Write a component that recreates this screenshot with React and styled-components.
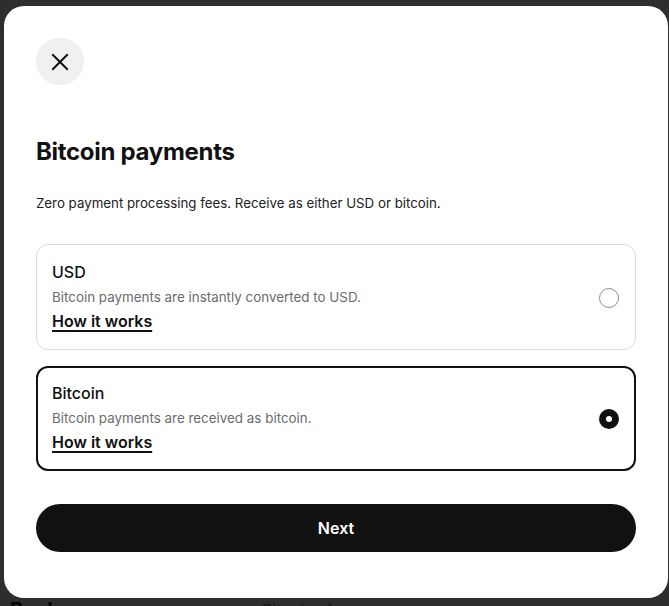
import React, { useState } from 'react';
import styled, { createGlobalStyle } from 'styled-components';

const GlobalStyle = createGlobalStyle`
  html, body {
    margin: 0;
    padding: 0;
    height: 100%;
    overflow: hidden;
  }
  body {
    background: #ffffff;
    font-family: Inter, "Noto Sans", "Liberation Sans", sans-serif;
    color: #111111;
    -webkit-font-smoothing: antialiased;
  }
`;

// page behind the dialog, mostly hidden by the overlay
const Page = styled.div`
  height: 100vh;
  display: flex;
  flex-direction: column;
`;

const PageSpacer = styled.div`
  flex: 1;
`;

const PageRow = styled.div`
  display: flex;
  align-items: flex-start;
  height: 22px;
  margin-bottom: -15px;
  padding-left: 10px;
`;

const PageRowLabel = styled.div`
  width: 252px;
  font-size: 20px;
  font-weight: 700;
  line-height: 22px;
  color: #111;
`;

const PageRowValue = styled.div`
  font-size: 16px;
  line-height: 22px;
  color: #777;
  display: flex;
  align-items: center;
  gap: 14px;
`;

const Overlay = styled.div`
  position: fixed;
  inset: 0;
  background: rgba(0, 0, 0, 0.82);
  display: flex;
  padding: 6px 1px 8px 4px;
  box-sizing: border-box;
`;

const Modal = styled.div`
  flex: 1;
  background: #ffffff;
  border-radius: 20px;
  padding: 32px 32px 46px;
  display: flex;
  flex-direction: column;
  box-sizing: border-box;
`;

const CloseButton = styled.button`
  width: 48px;
  height: 48px;
  border-radius: 50%;
  border: none;
  background: #f0f0f0;
  display: flex;
  align-items: center;
  justify-content: center;
  padding: 0;
  cursor: pointer;
`;

const Title = styled.h1`
  margin: 51px 0 0;
  font-size: 24px;
  line-height: 32px;
  font-weight: 700;
  letter-spacing: -0.3px;
  color: #111;
`;

const Subtitle = styled.p`
  margin: 25px 0 0;
  font-size: 13.3px;
  line-height: 20px;
  color: #222;
`;

const Options = styled.div`
  margin-top: 31px;
  display: flex;
  flex-direction: column;
  gap: 16px;
`;

const Option = styled.label`
  display: flex;
  align-items: center;
  border: ${p => (p.$selected ? '2px solid #111' : '1px solid #dcdcdc')};
  border-radius: 12px;
  padding: ${p => (p.$selected ? '15px 15px 15px 14px' : '17px 16px 16px 15px')};
  cursor: pointer;
`;

const OptionText = styled.div`
  flex: 1;
  display: flex;
  flex-direction: column;
`;

const OptionTitle = styled.div`
  font-size: 16px;
  line-height: 20px;
  font-weight: 500;
  color: #111;
`;

const OptionDesc = styled.div`
  margin-top: 5px;
  font-size: 13.4px;
  line-height: 20px;
  color: #6b6b6b;
`;

const HowLink = styled.a`
  margin-top: 2px;
  align-self: flex-start;
  font-size: 16px;
  line-height: 24px;
  font-weight: 600;
  color: #111;
  text-decoration: underline;
  text-underline-offset: 3px;
  text-decoration-thickness: 1.5px;
`;

const Radio = styled.span`
  width: 20px;
  height: 20px;
  border-radius: 50%;
  box-sizing: border-box;
  border: ${p => (p.$checked ? 'none' : '1.5px solid #8f8f8f')};
  background: ${p => (p.$checked ? '#111' : '#fff')};
  display: flex;
  align-items: center;
  justify-content: center;
  flex-shrink: 0;

  &::after {
    content: '';
    display: ${p => (p.$checked ? 'block' : 'none')};
    width: 6px;
    height: 6px;
    border-radius: 50%;
    background: #fff;
  }
`;

const NextButton = styled.button`
  margin-top: 33px;
  height: 48px;
  border: none;
  border-radius: 24px;
  background: #111111;
  color: #ffffff;
  font-family: inherit;
  font-size: 16px;
  font-weight: 600;
  cursor: pointer;
`;

const options = [
  { id: 'usd', title: 'USD', desc: 'Bitcoin payments are instantly converted to USD.' },
  { id: 'btc', title: 'Bitcoin', desc: 'Bitcoin payments are received as bitcoin.' },
];

function CloseIcon() {
  return (
    <svg width="18" height="18" viewBox="0 0 18 18" fill="none">
      <path d="M2 2 16 16M16 2 2 16" stroke="#111" strokeWidth="2" strokeLinecap="square" />
    </svg>
  );
}

function Chevron() {
  return (
    <svg width="10" height="14" viewBox="0 0 10 14" fill="none">
      <path d="M2 1l6 6-6 6" stroke="#777" strokeWidth="2" />
    </svg>
  );
}

export default function App() {
  const [selected, setSelected] = useState('btc');

  return (
    <>
      <GlobalStyle />
      <Page>
        <PageSpacer />
        <PageRow>
          <PageRowLabel>Bank</PageRowLabel>
          <PageRowValue>
            Bitcoin
            <Chevron />
          </PageRowValue>
        </PageRow>
      </Page>
      <Overlay>
        <Modal>
          <CloseButton aria-label="Close">
            <CloseIcon />
          </CloseButton>
          <Title>Bitcoin payments</Title>
          <Subtitle>Zero payment processing fees. Receive as either USD or bitcoin.</Subtitle>
          <Options>
            {options.map(opt => (
              <Option
                key={opt.id}
                $selected={selected === opt.id}
                onClick={() => setSelected(opt.id)}
              >
                <OptionText>
                  <OptionTitle>{opt.title}</OptionTitle>
                  <OptionDesc>{opt.desc}</OptionDesc>
                  <HowLink href="#">How it works</HowLink>
                </OptionText>
                <Radio $checked={selected === opt.id} />
              </Option>
            ))}
          </Options>
          <NextButton>Next</NextButton>
        </Modal>
      </Overlay>
    </>
  );
}
